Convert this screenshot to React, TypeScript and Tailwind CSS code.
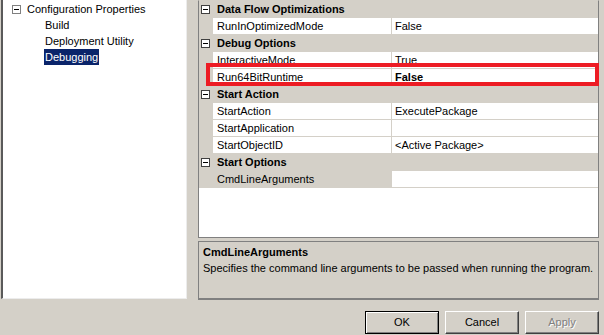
import React from "react";

type Row =
  | { kind: "header"; label: string }
  | { kind: "prop"; name: string; value: string; bold?: boolean; selected?: boolean };

const rows: Row[] = [
  { kind: "header", label: "Data Flow Optimizations" },
  { kind: "prop", name: "RunInOptimizedMode", value: "False" },
  { kind: "header", label: "Debug Options" },
  { kind: "prop", name: "InteractiveMode", value: "True" },
  { kind: "prop", name: "Run64BitRuntime", value: "False", bold: true },
  { kind: "header", label: "Start Action" },
  { kind: "prop", name: "StartAction", value: "ExecutePackage" },
  { kind: "prop", name: "StartApplication", value: "" },
  { kind: "prop", name: "StartObjectID", value: "<Active Package>" },
  { kind: "header", label: "Start Options" },
  { kind: "prop", name: "CmdLineArguments", value: "", selected: true },
];

function MinusBox({ className = "" }: { className?: string }) {
  return (
    <span
      className={`relative flex h-[9px] w-[9px] items-center justify-center border border-[#404040] bg-white ${className}`}
    >
      <span className="h-px w-[5px] bg-black" />
    </span>
  );
}

function GridRow({ row }: { row: Row }) {
  if (row.kind === "header") {
    return (
      <div className="flex h-[17px] bg-[#d4d0c8]">
        <div className="flex w-[14px] items-center pl-[2px]">
          <MinusBox />
        </div>
        <div className="pl-[4px] text-[11px] font-bold leading-[17px]">{row.label}</div>
      </div>
    );
  }
  return (
    <div className="flex h-[17px]">
      <div className="w-[14px] bg-[#d4d0c8]" />
      <div
        className={`w-[179px] border-b border-r border-[#d4d0c8] pl-[4px] leading-[16px] ${
          row.selected ? "bg-[#d4d0c8]" : "bg-white"
        }`}
      >
        {row.name}
      </div>
      <div
        className={`flex-1 border-b border-[#d4d0c8] bg-white pl-[3px] leading-[16px] ${
          row.bold ? "font-bold" : ""
        }`}
      >
        {row.value}
      </div>
    </div>
  );
}

function WinButton({
  label,
  isDefault,
  disabled,
}: {
  label: string;
  isDefault?: boolean;
  disabled?: boolean;
}) {
  const frame = isDefault
    ? "border border-black shadow-[inset_1px_1px_#ffffff,inset_-1px_-1px_#808080]"
    : "border border-t-white border-l-white border-r-[#404040] border-b-[#404040] shadow-[inset_-1px_-1px_#808080]";
  return (
    <button
      type="button"
      className={`h-[23px] w-[74px] bg-[#d4d0c8] text-[11px] leading-none ${frame} ${
        disabled ? "text-[#808080] [text-shadow:1px_1px_0_#ffffff]" : "text-black"
      }`}
    >
      {label}
    </button>
  );
}

export default function App() {
  return (
    <div className="relative h-[335px] w-[604px] overflow-hidden bg-[#d4d0c8] font-['Liberation_Sans',Arial,sans-serif] text-[11px] text-black">
      <div className="flex h-[300px]">
        {/* tree */}
        <div className="ml-px h-[299px] w-[186px] border-b border-l-2 border-r border-b-[#ececec] border-l-[#5a5a5a] border-r-[#ececec] bg-white pt-px">
          <div className="flex h-4 items-center">
            <MinusBox className="ml-[9px] border-[#808080]" />
            <span className="ml-[6px] leading-4">Configuration Properties</span>
          </div>
          <div className="h-4 pl-[42px] leading-4">Build</div>
          <div className="h-4 pl-[42px] leading-4">Deployment Utility</div>
          <div className="h-4 pl-[41px] leading-4">
            <span className="inline-block bg-[#0a246a] px-px text-white">Debugging</span>
          </div>
        </div>

        {/* property grid + description */}
        <div className="ml-[11px] flex w-[401px] flex-col">
          <div className="flex h-[238px] flex-col border border-t-[#d4d0c8] border-[#808080] bg-white">
            {rows.map((r, i) => (
              <GridRow key={i} row={r} />
            ))}
          </div>
          <div className="mt-[3px] h-[59px] border border-b-2 border-[#808080] px-[4px] pt-[2px]">
            <div className="font-bold leading-[16px]">CmdLineArguments</div>
            <div className="leading-[16px]">
              Specifies the command line arguments to be passed when running the program.
            </div>
          </div>
        </div>
      </div>

      <div className="mt-[11px] flex justify-end gap-[6px] pr-[5px]">
        <WinButton label="OK" isDefault />
        <WinButton label="Cancel" />
        <WinButton label="Apply" disabled />
      </div>

      {/* red highlight drawn over the grid */}
      <div className="absolute left-[206px] top-[63px] h-[23px] w-[393px] border-4 border-[#ed1c24]" />
    </div>
  );
}
